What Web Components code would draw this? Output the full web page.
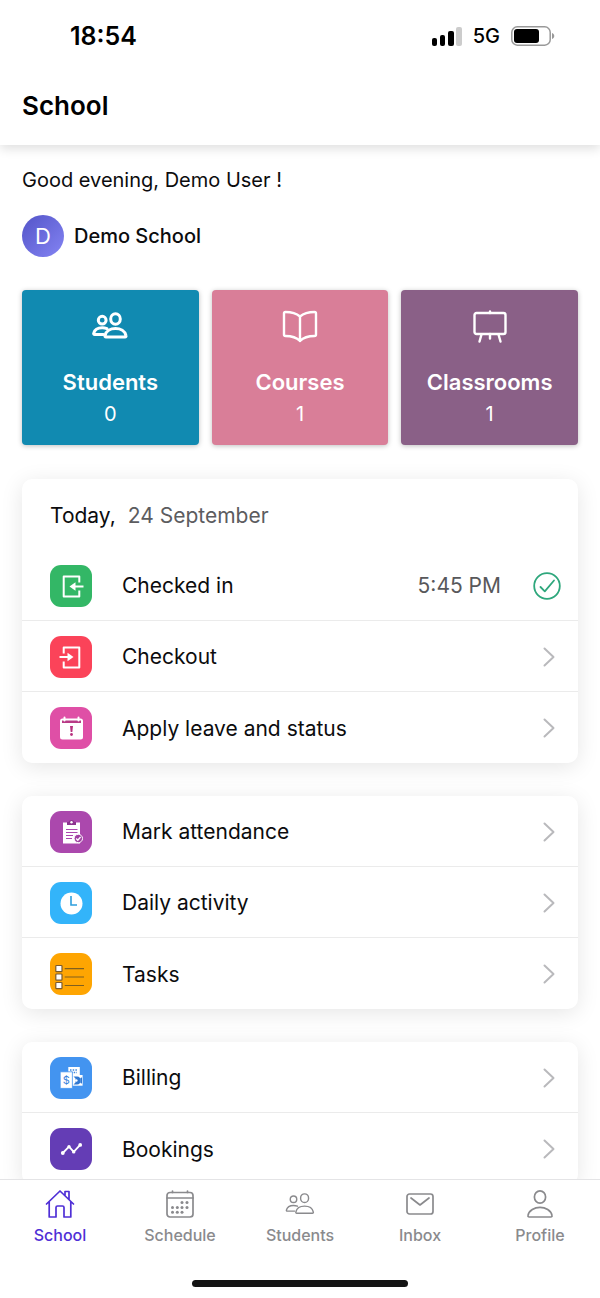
<!DOCTYPE html>
<html lang="en">
<head>
<meta charset="utf-8">
<meta name="viewport" content="width=device-width, initial-scale=1">
<title>School</title>
<style>
  html, body { height: 100%; margin: 0; }
  body { background: #fff; color: #0c0c0e; font-family: Inter, "Liberation Sans", sans-serif; }
</style>
</head>
<body>
<school-app>
  <status-bar slot="top" time="18:54" network="5G"></status-bar>
  <page-header slot="top">School</page-header>

  <user-greeting initial="D" school="Demo School">Good evening, Demo User !</user-greeting>
  <stat-grid>
    <stat-tile icon="students" label="Students" value="0" style="--tile: #118ab1; --stroke: 3"></stat-tile>
    <stat-tile icon="book" label="Courses" value="1" style="--tile: #d97e98"></stat-tile>
    <stat-tile icon="board" label="Classrooms" value="1" style="--tile: #8a6087"></stat-tile>
  </stat-grid>

  <menu-card>
    <day-heading slot="heading" day="Today,">24 September</day-heading>
    <menu-row icon="checkin" note="5:45 PM" done style="--badge: #33b766">Checked in</menu-row>
    <menu-row icon="checkout" style="--badge: #fb4359">Checkout</menu-row>
    <menu-row icon="leave" style="--badge: #df4fa6">Apply leave and status</menu-row>
  </menu-card>
  <menu-card>
    <menu-row icon="attendance" style="--badge: #ab48ad">Mark attendance</menu-row>
    <menu-row icon="clock" style="--badge: #33b4fa">Daily activity</menu-row>
    <menu-row icon="tasks" style="--badge: #fea502">Tasks</menu-row>
  </menu-card>
  <menu-card>
    <menu-row icon="billing" style="--badge: #4394f0">Billing</menu-row>
    <menu-row icon="bookings" style="--badge: #643db5">Bookings</menu-row>
  </menu-card>

  <tab-bar slot="bottom">
    <tab-item icon="home" current>School</tab-item>
    <tab-item icon="calendar">Schedule</tab-item>
    <tab-item icon="students">Students</tab-item>
    <tab-item icon="mail">Inbox</tab-item>
    <tab-item icon="person">Profile</tab-item>
  </tab-bar>
</school-app>

<script>
const ICONS = {
  students: ['0 0 36 36', `<g fill="none" stroke="currentColor" stroke-linejoin="round" stroke-linecap="round">
    <ellipse cx="23.500" cy="11" rx="4.800" ry="5.200"/><circle cx="10.200" cy="12.200" r="3.900"/>
    <path d="M14 29c-.8 0-1.200-.6-1-1.400C14 23 18.500 20.500 23.500 20.500s9.500 2.500 10.500 7.100c.2.800-.2 1.400-1 1.400z"/>
    <path d="M11.500 26.500H2.700c-.8 0-1.200-.6-1-1.300C2.600 21.700 6.200 19.700 10.200 19.700c1.700 0 3.300.3 4.700.900"/></g>`],
  book: ['0 0 36 36', `<path fill="none" stroke="currentColor" stroke-linejoin="round" stroke-linecap="round" d="M18 8.500C14.500 5.500 9.500 4 3.500 4c-1 0-1.500.5-1.500 1.400v21.200c0 .9.600 1.400 1.500 1.400 6.500 0 11 1.500 14.500 5 3.500-3.500 8-5 14.500-5 .9 0 1.500-.5 1.500-1.400V5.400C34 4.500 33.500 4 32.500 4 26.500 4 21.500 5.500 18 8.500zm0 0V33"/>`],
  board: ['0 0 36 36', `<g fill="none" stroke="currentColor" stroke-linejoin="round" stroke-linecap="round"><rect x="2.500" y="5" width="31" height="21" rx="2"/><path d="M18 3.500V5M18 26v4.500M9.500 26.500l-2 7M26.500 26.500l2 7"/></g>`],
  checkin: ['0 0 42 42', `<path fill="none" stroke="#fff" stroke-width="2" stroke-linejoin="round" d="M29.300 17.500v-6H13.700v20h15.600v-6"/><path stroke="#fff" stroke-width="2" d="M33.500 21.500H24"/><path fill="#fff" d="M19.500 21.500l6-4.300v8.600z"/>`],
  checkout: ['0 0 42 42', `<path fill="none" stroke="#fff" stroke-width="2" stroke-linejoin="round" d="M13.700 17.500v-6h15.600v20H13.700v-6"/><path stroke="#fff" stroke-width="2" d="M9.500 21H19"/><path fill="#fff" d="M23.500 21l-6-4.300v8.600z"/>`],
  leave: ['0 0 42 42', `<rect x="10" y="11.500" width="23" height="21" rx="2.500" fill="#fff"/><path fill="#b83a86" d="M12 13.500h19V16H12z"/><path stroke="#fff" stroke-width="2" stroke-linecap="round" d="M14.500 10.500v3M28.500 10.500v3"/><path fill="#b8327f" d="M20 19h3l-.7 6h-1.600z"/><circle cx="21.500" cy="27.500" r="1.400" fill="#b8327f"/>`],
  attendance: ['0 0 42 42', `<path fill="#fff" d="M13 11.500h17v21H13z"/><path fill="#8d348f" d="M17 11h1.500a3.200 3.200 0 0 1 6 0H26v3h-9z"/><circle cx="21.500" cy="11.300" r="1.200" fill="#fff"/><path stroke="#ab48ad" stroke-width="1.200" d="M16 18.500h11.500M16 21.500h11.500M16 24.500h7M16 27.500h6"/><circle cx="28.300" cy="27.500" r="4.200" fill="#a040a2" stroke="#fff" stroke-width="1"/><path fill="none" stroke="#fff" stroke-width="1.300" d="M26.200 27.500l1.600 1.700 2.800-3.200"/>`],
  clock: ['0 0 42 42', `<circle cx="21.500" cy="21.500" r="11" fill="#fff"/><path fill="none" stroke="#2e9fdd" stroke-width="1.600" d="M21 14v9h6"/>`],
  tasks: ['0 0 42 42', `<g fill="#fff" stroke="#7a5a2c" stroke-width="1.200"><rect x="5.800" y="12.500" width="6.200" height="6.200" rx=".8"/><rect x="5.800" y="21" width="6.200" height="6.200" rx=".8"/><rect x="5.800" y="29.500" width="6.200" height="6.200" rx=".8"/></g><path stroke="#80601f" stroke-width="1.200" d="M14.700 15.700H34M14.700 24H34M14.700 32.500H34"/>`],
  billing: ['0 0 42 42', `<path fill="#fff" d="M18.300 10h11.500v9H18.300z"/><path stroke="#3d86dc" stroke-width="1.300" stroke-dasharray="1.500 1.200" d="M20 13h8M21 15.500h6"/><path fill="#fff" d="M22 18h10.600v10.700H22z"/><path fill="#2f78d2" d="M23.500 19.500h3.500c5 0 5 8 0 8h-3.500l2-2v-4z"/><path fill="#2f78d2" d="M32 20.500c-2 0-2 1-1.200 3-.8 2-.8 3 1.200 3z"/><circle cx="26.300" cy="23.500" r="1.300" fill="#fff"/><path fill="#fff" stroke="#4394f0" stroke-width=".8" d="M10.200 14.800h12.200v16.600H10.200z"/><text x="16.300" y="27" text-anchor="middle" font-size="11" fill="#3a82dc">$</text>`],
  bookings: ['0 0 42 42', `<path fill="none" stroke="#fff" stroke-width="1.800" stroke-linejoin="round" d="M12.800 25l6.200-6.300 4.700 5.200 6.500-7"/><g fill="#fff"><circle cx="12.800" cy="25" r="1.900"/><circle cx="19" cy="18.700" r="1.700"/><circle cx="23.700" cy="23.900" r="1.700"/><circle cx="30.200" cy="16.900" r="1.900"/></g>`],
  home: ['0 0 30 30', `<path fill="none" stroke="currentColor" stroke-linejoin="round" stroke-linecap="round" d="M1.500 15L15 2l13.500 13M4.200 12.800V28H11V18.500c0-1 .6-1.500 1.500-1.500h5c.9 0 1.500.5 1.500 1.500V28h6.800V12.800M20 6.500V2.500h4v8"/>`],
  calendar: ['0 0 30 30', `<g fill="none" stroke="currentColor" stroke-linecap="round"><rect x="2" y="3.500" width="26" height="24.500" rx="3"/><path d="M2 9h26M7.500 2v1.500M22.500 2v1.500"/></g><g fill="currentColor"><circle cx="17" cy="13.500" r="1.500"/><circle cx="22" cy="13.500" r="1.500"/><circle cx="7.500" cy="18.500" r="1.500"/><circle cx="12.300" cy="18.500" r="1.500"/><circle cx="17" cy="18.500" r="1.500"/><circle cx="22" cy="18.500" r="1.500"/><circle cx="7.500" cy="23.300" r="1.500"/><circle cx="12.300" cy="23.300" r="1.500"/><circle cx="17" cy="23.300" r="1.500"/></g>`],
  mail: ['0 0 30 30', `<g fill="none" stroke="currentColor" stroke-linejoin="round" stroke-linecap="round"><rect x="2" y="5" width="26" height="20" rx="2.500"/><path d="M6 9l9 7 9-7"/></g>`],
  person: ['0 0 30 30', `<g fill="none" stroke="currentColor" stroke-linejoin="round"><ellipse cx="15" cy="8" rx="5.600" ry="6.200"/><path d="M4.200 28c-1 0-1.400-.7-1.200-1.600C4 21.300 9.500 18.300 15 18.300s11 3 12 8.100c.2.900-.2 1.600-1.200 1.600z"/></g>`],
  chevron: ['0 0 12 20', `<path fill="none" stroke="currentColor" stroke-linecap="round" stroke-linejoin="round" d="M1.500 1.500L10.500 10l-9 8.500"/>`],
  done: ['0 0 28 28', `<g fill="none" stroke="currentColor" stroke-linecap="round" stroke-linejoin="round"><circle cx="14" cy="14" r="12.800"/><path d="M7.500 15l4.300 4.300L21 8.500"/></g>`]
};

class Base extends HTMLElement {
  connectedCallback() {
    if (this.shadowRoot) return;
    this.attachShadow({ mode: 'open' }).innerHTML =
      `<style>*{box-sizing:border-box}:host{display:block}a{color:inherit;text-decoration:none}${this.css()}</style>${this.html()}`;
  }
  a(name) { return this.getAttribute(name) || ''; }
  css() { return ''; }
  html() { return '<slot></slot>'; }
}

customElements.define('ui-icon', class extends Base {
  css() { return 'svg{display:block;width:100%;height:100%;stroke-width:var(--stroke,2)}text{stroke:none}'; }
  html() {
    const [box, art] = ICONS[this.a('name')];
    return `<svg viewBox="${box}" aria-hidden="true">${art}</svg>`;
  }
});

customElements.define('school-app', class extends Base {
  css() {
    return `:host{display:flex;flex-direction:column;height:100vh}
      header{position:relative;z-index:1;background:#fff;box-shadow:0 4px 10px rgba(0,0,0,.12)}
      main{flex:1;min-height:0;overflow-y:auto;scrollbar-width:none;padding:20px 22px 33px}`;
  }
  html() {
    return '<header><slot name="top"></slot></header><main><slot></slot></main><slot name="bottom"></slot>';
  }
});

customElements.define('status-bar', class extends Base {
  css() {
    return `:host{display:flex;justify-content:space-between;align-items:center;height:72px;padding:0 45px 0 70px;color:#000}
      .time{font-size:25px;font-weight:600}
      .right{display:flex;align-items:center;gap:11px;font-size:20px;font-weight:500}
      svg{display:block}`;
  }
  html() {
    return `<span class="time">${this.a('time')}</span>
      <span class="right">
        <svg width="31" height="20" viewBox="0 0 31 20" aria-hidden="true"><rect x="1" y="12" width="5" height="8" rx="2"/><rect x="9" y="9" width="5" height="11" rx="2"/><rect x="17" y="5" width="6" height="15" rx="2"/><rect x="25" y="1" width="6" height="19" rx="2" fill="#ccc"/></svg>
        <span>${this.a('network')}</span>
        <svg width="44" height="20" viewBox="0 0 44 20" aria-hidden="true"><rect x=".8" y=".8" width="38.400" height="18.400" rx="5.500" fill="none" stroke="#999" stroke-width="1.500"/><rect x="3" y="3" width="25" height="14" rx="3"/><path d="M41 7c3 .8 3 5.200 0 6z" fill="#999"/></svg>
      </span>`;
  }
});

customElements.define('page-header', class extends Base {
  css() { return 'h1{margin:0;padding:16px 22px 21px;font-size:26px;line-height:36px;font-weight:600;color:#000}'; }
  html() { return '<h1><slot></slot></h1>'; }
});

customElements.define('user-greeting', class extends Base {
  css() {
    return `p{margin:0 0 20px;font-size:20px;line-height:30px}
      .school{display:flex;align-items:center;gap:10px;font-size:20px;font-weight:500}
      .avatar{display:grid;place-items:center;width:42px;height:42px;border-radius:50%;background:linear-gradient(135deg,#5354c8,#8484f3);color:#fff;font-size:22px;font-weight:400}`;
  }
  html() {
    return `<p><slot></slot></p><div class="school"><span class="avatar">${this.a('initial')}</span><span>${this.a('school')}</span></div>`;
  }
});

customElements.define('stat-grid', class extends Base {
  css() { return ':host{display:grid;grid-template-columns:repeat(3,1fr);gap:13px;margin:33px 0 34px}'; }
});

customElements.define('stat-tile', class extends Base {
  css() {
    return `a{display:flex;flex-direction:column;align-items:center;padding:18px 4px 14px;border-radius:4px;background:var(--tile);color:#fff;box-shadow:0 1px 5px rgba(0,0,0,.25)}
      :host{--stroke:2.4}
      ui-icon{width:36px;height:36px;margin-bottom:22px}
      .label{font-size:22px;line-height:32px;font-weight:600}
      .value{font-size:20px;line-height:33px}`;
  }
  html() {
    return `<a href="#"><ui-icon name="${this.a('icon')}"></ui-icon><span class="label">${this.a('label')}</span><span class="value">${this.a('value')}</span></a>`;
  }
});

customElements.define('menu-card', class extends Base {
  css() {
    return `:host{background:#fff;border-radius:10px;box-shadow:0 4px 22px rgba(0,0,0,.1)}
      :host(:not(:last-of-type)){margin-bottom:33px}
      ::slotted(menu-row:not(:last-child)){border-bottom:1px solid #ebebeb}`;
  }
  html() { return '<slot name="heading"></slot><slot></slot>'; }
});

customElements.define('day-heading', class extends Base {
  css() {
    return `h2{display:flex;align-items:center;gap:12px;height:71px;margin:0;padding:2px 28px 0;font-size:21px;font-weight:400}
      .date{color:#5c5c5f}`;
  }
  html() { return `<h2><span>${this.a('day')}</span><span class="date"><slot></slot></span></h2>`; }
});

customElements.define('menu-row', class extends Base {
  css() {
    return `:host{box-sizing:border-box;height:71px}
      a{display:flex;align-items:center;height:100%;padding:1px 23px 0 28px;font-size:21px}
      .badge{width:42px;height:42px;margin-right:30px;border-radius:11px;background:var(--badge)}
      .label{flex:1}
      .note{margin-right:32px;color:#58585b}
      .chevron{width:12px;height:20px;color:#b9b9bc;--stroke:2}
      .done{width:28px;height:28px;margin-right:-6px;color:#2ea77c;--stroke:1.8}`;
  }
  html() {
    const end = this.hasAttribute('done') ? 'done' : 'chevron';
    const note = this.a('note') ? `<span class="note">${this.a('note')}</span>` : '';
    return `<a href="#"><ui-icon class="badge" name="${this.a('icon')}"></ui-icon><span class="label"><slot></slot></span>${note}<ui-icon class="${end}" name="${end}"></ui-icon></a>`;
  }
});

customElements.define('tab-bar', class extends Base {
  css() {
    return `:host{position:relative;z-index:1;background:#fff;border-top:1px solid #e4e4e6}
      nav{display:grid;grid-template-columns:repeat(5,1fr);padding-top:9px}
      .grip{width:36%;height:7px;margin:35px auto 11px;border-radius:4px;background:#141414}`;
  }
  html() { return '<nav><slot></slot></nav><div class="grip"></div>'; }
});

customElements.define('tab-item', class extends Base {
  css() {
    return `a{display:flex;flex-direction:column;align-items:center;gap:6px;color:#8a8a8d;font-size:16px;line-height:20px;font-weight:500}
      :host([current]) a{color:#4f2fd6}
      ui-icon{width:30px;height:30px;--stroke:1.7}`;
  }
  html() {
    const current = this.hasAttribute('current') ? ' aria-current="page"' : '';
    return `<a href="#"${current}><ui-icon name="${this.a('icon')}"></ui-icon><span><slot></slot></span></a>`;
  }
});
</script>
</body>
</html>
